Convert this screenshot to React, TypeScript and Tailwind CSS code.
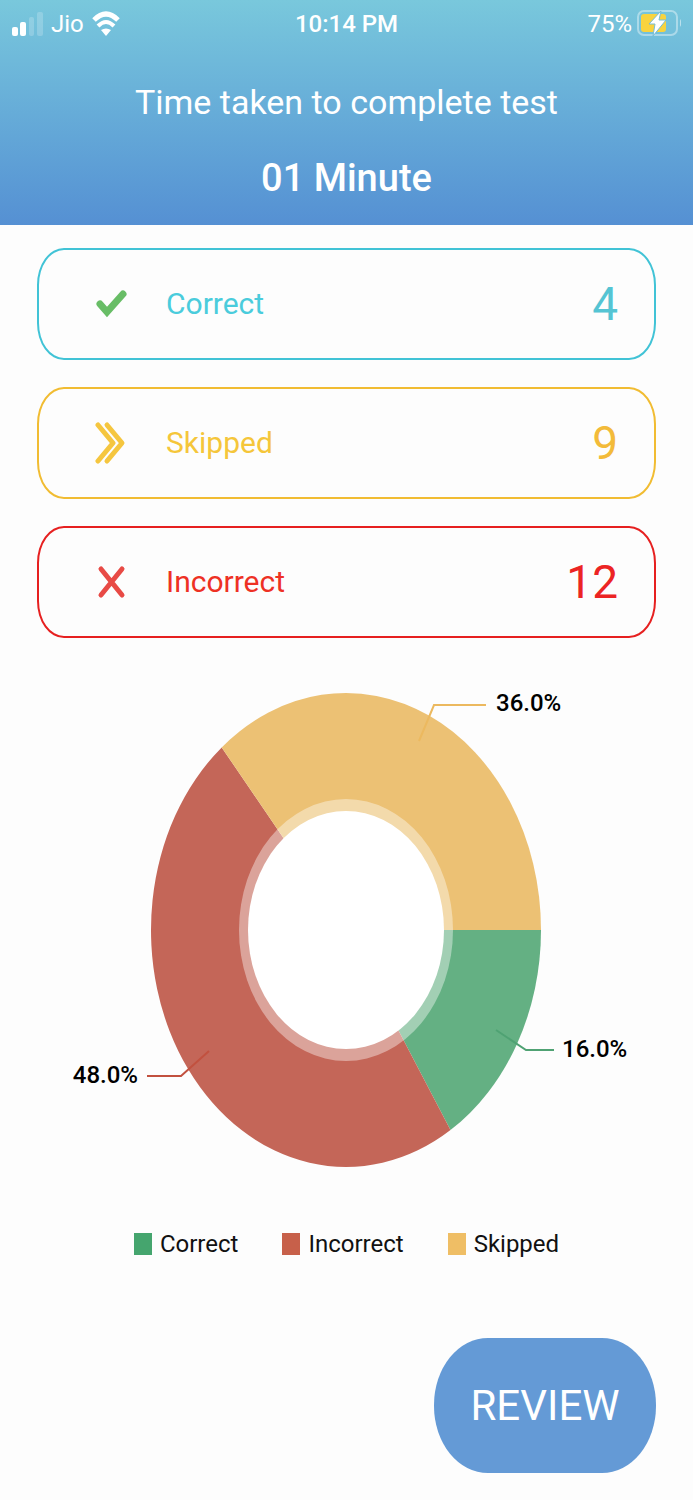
import type { ReactNode } from 'react';

const CX = 346;
const CY = 250;

// share of the answers, drawn clockwise from three o'clock
const slices = [
  { name: 'Correct', percent: 16, fill: '#64b083' },
  { name: 'Incorrect', percent: 48, fill: '#c46658' },
  { name: 'Skipped', percent: 36, fill: '#ecc174' },
];

const legend = [
  { name: 'Correct', swatch: 'bg-[#45a56e]' },
  { name: 'Incorrect', swatch: 'bg-[#c7604a]' },
  { name: 'Skipped', swatch: 'bg-[#efbe65]' },
];

function wedge(start: number, end: number, rx: number, ry: number) {
  const a = (start / 100) * Math.PI * 2;
  const b = (end / 100) * Math.PI * 2;
  const large = end - start > 50 ? 1 : 0;
  return [
    `M${CX} ${CY}`,
    `L${CX + rx * Math.cos(a)} ${CY + ry * Math.sin(a)}`,
    `A${rx} ${ry} 0 ${large} 1 ${CX + rx * Math.cos(b)} ${CY + ry * Math.sin(b)}`,
    'Z',
  ].join(' ');
}

function StatusBar() {
  return (
    <div className="grid h-10 grid-cols-3 items-center px-3 pt-2 text-2xl">
      <div className="flex items-center gap-2">
        <svg width="31" height="24" viewBox="0 0 31 24" fill="#fff" aria-hidden="true">
          <rect x="0" y="15" width="6" height="9" rx="2" />
          <rect x="8" y="10" width="6" height="14" rx="2" />
          <rect x="17" y="5" width="5" height="19" rx="2" opacity="0.2" />
          <rect x="25" y="0" width="6" height="24" rx="2" opacity="0.2" />
        </svg>
        <span>Jio</span>
        <svg width="28" height="26" viewBox="0 0 28 26" aria-hidden="true">
          <path d="M2 9Q14 -3 26 9" fill="none" stroke="#fff" strokeWidth="5" />
          <path d="M6 15Q14 7 22 15" fill="none" stroke="#fff" strokeWidth="4" />
          <path d="M9 19Q14 16 19 19L14 25Z" fill="#fff" />
        </svg>
      </div>
      <span className="text-center font-medium">10:14 PM</span>
      <div className="flex items-center justify-end gap-1">
        <span>75%</span>
        <svg width="45" height="28" viewBox="0 0 45 28" aria-hidden="true">
          <rect x="2" y="1" width="39" height="24" rx="6" fill="none" stroke="#fff" strokeWidth="2" opacity="0.4" />
          <path d="M44 9Q47 13 44 17Z" fill="#fff" opacity="0.5" />
          <rect x="5" y="4" width="25" height="18" rx="3" fill="#f8d33f" />
          <path d="M25 1L13 14H19L17 26L30 10H23Z" fill="#fff" stroke="#76bdd8" strokeWidth="1" strokeLinejoin="round" />
        </svg>
      </div>
    </div>
  );
}

interface ResultCardProps {
  label: string;
  count: number;
  border: string;
  text: string;
  countText: string;
  children: ReactNode;
}

function ResultCard({ label, count, border, text, countText, children }: ResultCardProps) {
  return (
    <li className={`flex h-28 items-center rounded-[27px/37px] border-2 pl-14 pr-9 ${border}`}>
      <svg width="34" height="44" viewBox="0 0 34 44" fill="none" strokeLinecap="round" aria-hidden="true">
        {children}
      </svg>
      <span className={`ml-[37px] text-[30px] leading-9 ${text}`}>{label}</span>
      <span className={`ml-auto text-[46px] leading-none ${countText}`}>{count}</span>
    </li>
  );
}

function AnswerChart() {
  let from = 0;
  const parts = slices.map((slice) => {
    const start = from;
    from += slice.percent;
    return { ...slice, start, end: from };
  });

  return (
    <svg viewBox="0 0 693 500" className="w-full" role="img" aria-label="Share of correct, incorrect and skipped answers">
      {parts.map((p) => (
        <path key={p.name} d={wedge(p.start, p.end, 195, 237)} fill={p.fill} />
      ))}
      <ellipse cx={CX} cy={CY} rx="107" ry="131" fill="#fff" opacity="0.4" />
      <ellipse cx={CX} cy={CY} rx="98" ry="119" fill="#fff" />

      <g fill="none" strokeWidth="2">
        <path d="M419 61L434 25H486" stroke="#ecb95f" />
        <path d="M496 350L526 370H554" stroke="#4fa273" />
        <path d="M209 371L181 396H147" stroke="#c2513f" />
      </g>
      <g className="text-2xl font-medium" fill="#000">
        <text x="496" y="31">36.0%</text>
        <text x="562" y="377">16.0%</text>
        <text x="138" y="403" textAnchor="end">48.0%</text>
      </g>
    </svg>
  );
}

export default function App() {
  return (
    <div className="bg-[#fdfdfd] font-['Roboto',sans-serif]">
      <header className="bg-linear-to-b from-[#79c8dc] to-[#5590d3] pb-5 text-white">
        <StatusBar />
        <h1 className="mt-9 text-center text-[34px] leading-[52px]">Time taken to complete test</h1>
        <p className="mt-[23px] text-center text-[38px] font-medium leading-[54px]">01 Minute</p>
      </header>

      <main>
        <ul className="mx-[37px] mt-[23px] flex flex-col gap-[27px]">
          <ResultCard label="Correct" count={4} border="border-[#41c3d6]" text="text-[#4accdc]" countText="text-[#55c4d3]">
            <path d="M5 22L12 30L28 12" stroke="#68bd66" strokeWidth="7" strokeLinejoin="miter" />
          </ResultCard>
          <ResultCard label="Skipped" count={9} border="border-[#f1bc32]" text="text-[#f5c63a]" countText="text-[#f3bb3a]">
            <g stroke="#f5c63f" strokeWidth="5" strokeLinejoin="round">
              <path d="M3 4L18 22L3 40" />
              <path d="M12 4L27 22L12 40" />
            </g>
          </ResultCard>
          <ResultCard label="Incorrect" count={12} border="border-[#e62020]" text="text-[#ee3124]" countText="text-[#ec2424]">
            <path d="M6 9L27 35M27 9L6 35" stroke="#e84a45" strokeWidth="5" />
          </ResultCard>
        </ul>

        <section className="mt-[42px]">
          <AnswerChart />
          <ul className="mt-12 flex justify-center gap-11 text-2xl text-[#111]">
            {legend.map((item) => (
              <li key={item.name} className="flex items-center gap-2">
                <span className={`h-[22px] w-[18px] ${item.swatch}`} />
                {item.name}
              </li>
            ))}
          </ul>
        </section>

        <div className="flex justify-end px-[37px] pb-[27px] pt-[78px]">
          <button type="button" className="h-[135px] w-[222px] rounded-[54px/67px] bg-[#649ad6] text-[42px] text-white">
            REVIEW
          </button>
        </div>
      </main>
    </div>
  );
}
